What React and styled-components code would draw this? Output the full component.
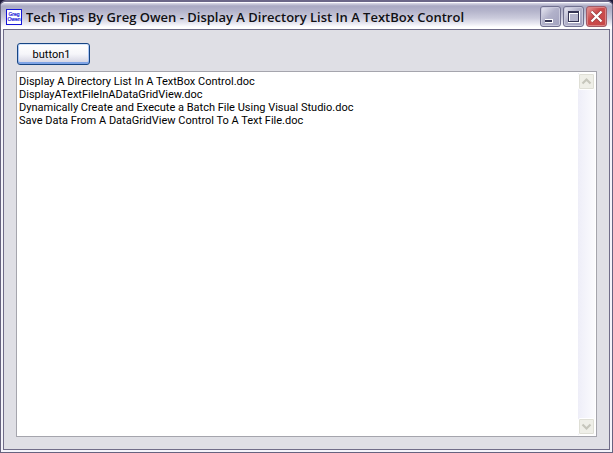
import React from "react";
import styled, { createGlobalStyle } from "styled-components";

const GlobalStyle = createGlobalStyle`
  * {
    box-sizing: border-box;
  }
  body {
    margin: 0;
    background: #1d1a3a;
    font-family: Roboto, "Liberation Sans", sans-serif;
  }
`;

const Window = styled.div`
  display: flex;
  flex-direction: column;
  height: 100vh;
  overflow: hidden;
  padding: 0 2px 2px;
  border: 1px solid #66637f;
  border-top: 2px solid #6b6788;
  border-radius: 6px 6px 0 0;
  background: #f4f4fa;
`;

const TitleBar = styled.header`
  display: flex;
  align-items: center;
  gap: 4px;
  height: 27px;
  flex: none;
  margin: 0 -2px;
  padding: 1px 5px 0 5px;
  border-top: 1px solid #fbfbff;
  background: linear-gradient(
    #dcdce8 0,
    #a9a9c3 3px,
    #b4b4cb 8px,
    #cbcbdc 15px,
    #ececf4 21px,
    #ffffff 24px
  );
`;

const Title = styled.h1`
  flex: 1;
  margin: 0;
  overflow: hidden;
  white-space: nowrap;
  color: #101014;
  font: 600 13px/20px "Open Sans", "Noto Sans", sans-serif;
`;

const Controls = styled.div`
  display: flex;
  gap: 2px;
`;

const ControlButton = styled.button`
  width: 21px;
  height: 21px;
  padding: 0;
  border: 1px solid ${({ $close }) => ($close ? "#a05b68" : "#70708f")};
  border-radius: 3px;
  background: ${({ $close }) =>
    $close
      ? "linear-gradient(135deg, #e39a98, #cc4c4d 40%, #c64546)"
      : "linear-gradient(135deg, #e9e9f3, #b2b2ca 45%, #a1a1be)"};
  box-shadow: inset 0 0 0 1px ${({ $close }) => ($close ? "#db8484" : "#c9c9dc")};

  svg {
    display: block;
  }
`;

const Form = styled.main`
  display: flex;
  flex: 1;
  flex-direction: column;
  align-items: flex-start;
  gap: 6px;
  min-height: 0;
  padding: 12px;
  border: 1px solid #706d89;
  background: #dfdfe5;
`;

const PushButton = styled.button`
  width: 73px;
  height: 22px;
  margin: 1px 1px 0;
  padding: 0 4px 0 0;
  border: 1px solid #174583;
  border-radius: 3px;
  background: linear-gradient(#ffffff, #f6f6fa 50%, #cfcfdf);
  box-shadow:
    inset 0 1px #d5e5fb,
    inset 0 -2px #7fa4e6,
    inset 1px 0 #aac6f5,
    inset -1px 0 #aac6f5;
  color: #000;
  font: 11px/13px Roboto, "Liberation Sans", sans-serif;
`;

const TextBox = styled.div`
  display: flex;
  flex: 1;
  width: 100%;
  min-height: 0;
  border: 1px solid #a5a5ad;
  background: #fff;
`;

const TextArea = styled.textarea`
  flex: 1;
  min-width: 0;
  margin: 0;
  padding: 3px 2px;
  border: 0;
  outline: 0;
  resize: none;
  overflow: hidden;
  background: transparent;
  color: #000;
  font: 11px/13px Roboto, "Liberation Sans", sans-serif;
`;

const ScrollBar = styled.div`
  display: flex;
  flex-direction: column;
  justify-content: space-between;
  width: 17px;
  margin: 1px;
  background: linear-gradient(90deg, #eeeef8, #fbfbfe);
`;

const ScrollButton = styled.button`
  width: 17px;
  height: 17px;
  padding: 0;
  border: 1px solid #fff;
  border-radius: 2px;
  background: #efefe8;
  box-shadow: inset 0 0 0 1px #dfdfd6;

  svg {
    display: block;
  }
`;

const AppIcon = () => (
  <svg width="16" height="16" viewBox="0 0 16 16" aria-hidden="true">
    <rect x="0.5" y="0.5" width="15" height="15" fill="#fff" stroke="#1414d8" />
    <g
      fill="#1818d8"
      fontFamily="Liberation Sans, sans-serif"
      fontSize="5"
      textAnchor="middle"
      stroke="#1818d8"
      strokeWidth="0.2"
    >
      <text x="8" y="7">Greg</text>
      <text x="8" y="12">Owen</text>
    </g>
  </svg>
);

const MinimizeIcon = () => (
  <svg width="19" height="19" viewBox="0 0 19 19">
    <path d="M4 12h8v4H4z" fill="#fff" />
    <path d="M4 13h7v2H4z" fill="#343453" />
  </svg>
);

const MaximizeIcon = () => (
  <svg width="19" height="19" viewBox="0 0 19 19">
    <path d="M4 4h12v12H4z" fill="#fff" />
    <path d="M4 4h11v11H4z" fill="#343453" />
    <path d="M5 6h9v8H5z" fill="#fff" />
    <path d="M6 7h8v7H6z" fill="#b4b4cb" />
  </svg>
);

const CloseIcon = () => (
  <svg width="19" height="19" viewBox="0 0 19 19" fill="none">
    <path d="M4.5 4.5l10 10M14.5 4.5l-10 10" stroke="#94383c" strokeWidth="3.6" />
    <path d="M4.5 4.5l10 10M14.5 4.5l-10 10" stroke="#fff" strokeWidth="2.3" />
  </svg>
);

const Chevron = ({ down }) => (
  <svg width="15" height="15" viewBox="0 0 15 15" fill="none">
    <path
      d={down ? "M3.5 5.5l4 4 4-4" : "M3.5 9.5l4-4 4 4"}
      stroke="#c6c6bc"
      strokeWidth="2.2"
    />
  </svg>
);

const files = [
  "Display A Directory List In A TextBox Control.doc",
  "DisplayATextFileInADataGridView.doc",
  "Dynamically Create and Execute a Batch File Using Visual Studio.doc",
  "Save Data From A DataGridView Control To A Text File.doc",
];

const App = () => {
  return (
    <>
      <GlobalStyle />
      <Window>
        <TitleBar>
          <AppIcon />
          <Title>
            Tech Tips By Greg Owen - Display A Directory List In A TextBox Control
          </Title>
          <Controls>
            <ControlButton type="button" aria-label="Minimize">
              <MinimizeIcon />
            </ControlButton>
            <ControlButton type="button" aria-label="Maximize">
              <MaximizeIcon />
            </ControlButton>
            <ControlButton type="button" aria-label="Close" $close>
              <CloseIcon />
            </ControlButton>
          </Controls>
        </TitleBar>
        <Form>
          <PushButton type="button">button1</PushButton>
          <TextBox>
            <TextArea
              aria-label="Directory list"
              spellCheck={false}
              defaultValue={files.join("\n")}
            />
            <ScrollBar>
              <ScrollButton type="button" aria-label="Scroll up" disabled>
                <Chevron />
              </ScrollButton>
              <ScrollButton type="button" aria-label="Scroll down" disabled>
                <Chevron down />
              </ScrollButton>
            </ScrollBar>
          </TextBox>
        </Form>
      </Window>
    </>
  );
};

export default App;
